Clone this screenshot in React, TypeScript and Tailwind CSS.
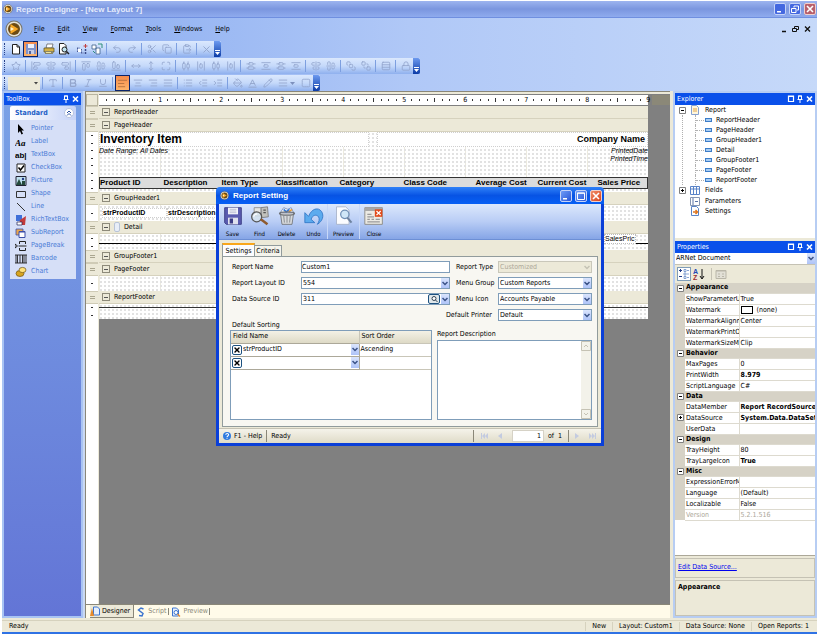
import type { ReactNode } from 'react';
import {
  AlignCenter,
  AlignCenterHorizontal,
  AlignCenterVertical,
  AlignEndHorizontal,
  AlignEndVertical,
  AlignHorizontalDistributeCenter,
  AlignHorizontalSpaceAround,
  AlignJustify,
  AlignLeft,
  AlignRight,
  AlignStartHorizontal,
  AlignStartVertical,
  AlignVerticalDistributeCenter,
  AlignVerticalSpaceAround,
  Baseline,
  Bold,
  BringToFront,
  ClipboardPaste,
  Copy,
  IndentDecrease,
  IndentIncrease,
  Italic,
  List,
  Lock,
  Maximize,
  MoveHorizontal,
  MoveVertical,
  PaintBucket,
  Pencil,
  Redo2,
  Rows3,
  Scissors,
  SendToBack,
  Square,
  Star,
  Type,
  Underline,
  Undo2,
  X,
  type LucideIcon,
} from 'lucide-react';
import clsx from 'clsx';

const menus = ['File', 'Edit', 'View', 'Format', 'Tools', 'Windows', 'Help'];

const layoutTools: [string, LucideIcon][][] = [
  [['Snap to grid', Star]],
  [['Align lefts', AlignStartVertical], ['Align centers', AlignCenterVertical], ['Align rights', AlignEndVertical]],
  [['Align tops', AlignStartHorizontal], ['Align middles', AlignCenterHorizontal], ['Align bottoms', AlignEndHorizontal]],
  [['Same width', MoveHorizontal], ['Same height', MoveVertical], ['Same size', Maximize]],
  [
    ['Equal horizontal spacing', AlignHorizontalDistributeCenter],
    ['Increase horizontal spacing', AlignHorizontalSpaceAround],
    ['Decrease horizontal spacing', AlignHorizontalDistributeCenter],
    ['Remove horizontal spacing', AlignHorizontalSpaceAround],
  ],
  [
    ['Equal vertical spacing', AlignVerticalDistributeCenter],
    ['Increase vertical spacing', AlignVerticalSpaceAround],
    ['Decrease vertical spacing', AlignVerticalDistributeCenter],
    ['Remove vertical spacing', AlignVerticalSpaceAround],
  ],
  [['Center horizontally', AlignCenterVertical], ['Center vertically', AlignCenterHorizontal]],
  [['Bring to front', BringToFront], ['Send to back', SendToBack]],
  [['Reorder groups', Rows3]],
  [['Lock controls', Lock]],
];

const columns = [
  'Product ID',
  'Description',
  'Item Type',
  'Classification',
  'Category',
  'Class Code',
  'Average Cost',
  'Current Cost',
  'Sales Price',
];

const propertyGroups: { name: string; rows: { name: string; value: string; bold?: boolean; plus?: boolean; muted?: boolean; swatch?: boolean }[] }[] = [
  {
    name: 'Appearance',
    rows: [
      { name: 'ShowParameterUI', value: 'True' },
      { name: 'Watermark', value: '(none)', swatch: true },
      { name: 'WatermarkAlignment', value: 'Center' },
      { name: 'WatermarkPrintOnPages', value: '' },
      { name: 'WatermarkSizeMode', value: 'Clip' },
    ],
  },
  {
    name: 'Behavior',
    rows: [
      { name: 'MaxPages', value: '0' },
      { name: 'PrintWidth', value: '8.979', bold: true },
      { name: 'ScriptLanguage', value: 'C#' },
    ],
  },
  {
    name: 'Data',
    rows: [
      { name: 'DataMember', value: 'Report RecordSource', bold: true },
      { name: 'DataSource', value: 'System.Data.DataSet', bold: true, plus: true },
      { name: 'UserData', value: '' },
    ],
  },
  {
    name: 'Design',
    rows: [
      { name: 'TrayHeight', value: '80' },
      { name: 'TrayLargeIcon', value: 'True', bold: true },
    ],
  },
  {
    name: 'Misc',
    rows: [
      { name: 'ExpressionErrorMessage', value: '' },
      { name: 'Language', value: '(Default)' },
      { name: 'Localizable', value: 'False' },
      { name: 'Version', value: '5.2.1.516', muted: true },
    ],
  },
];

function AppLogo({ className }: { className: string }) {
  return (
    <svg viewBox="0 0 18 18" className={className} aria-hidden="true">
      <circle cx="9" cy="9" r="8.5" fill="#77756c" />
      <circle cx="9" cy="9" r="7.5" fill="#e4e1d7" />
      <circle cx="9" cy="9" r="6" fill="#6b4a14" />
      <path d="M5.500 4v10L13.500 9z" fill="#f7a928" />
      <path d="M5.500 7v4L9 9z" fill="#fff3cf" />
    </svg>
  );
}

function ToolButton({ label, active, disabled, children }: { label: string; active?: boolean; disabled?: boolean; children: ReactNode }) {
  return (
    <button
      type="button"
      title={label}
      aria-label={label}
      disabled={disabled}
      className={clsx(
        'flex h-4 w-[15px] shrink-0 items-center justify-center',
        active && 'border border-[#0a246a] bg-gradient-to-b from-[#f58b4c] to-[#fdb46b]',
        disabled && 'text-[#93a5cc]'
      )}
    >
      {children}
    </button>
  );
}

function Sep({ blank }: { blank?: boolean }) {
  return (
    <span className={clsx('flex shrink-0 justify-center', blank ? 'w-[3px]' : 'w-[5px]')}>
      {!blank && <span className="h-3 w-px bg-[#7d9fe0]" />}
    </span>
  );
}

function Toolbar({ label, children }: { label: string; children: ReactNode }) {
  return (
    <div
      role="toolbar"
      aria-label={label}
      className="mt-px flex h-4 w-fit items-center bg-gradient-to-b from-[#dbe8fd] via-[#c5d9fa] to-[#8fb0ee]"
    >
      <span className="ml-0.5 mr-[3px] h-3 border-l border-dotted border-[#27418a]" />
      {children}
      <button type="button" aria-label="Toolbar options" className="flex h-4 w-[7px] items-end justify-center rounded-r-[2px] bg-gradient-to-b from-[#6d9af0] to-[#0b3ba6] pb-0.5">
        <svg viewBox="0 0 5 5" className="size-[5px]">
          <path d="M0 0h5v1H0zM0 2h5L2.500 5z" fill="#fff" />
        </svg>
      </button>
    </div>
  );
}

const standardIcons = {
  page: (
    <svg viewBox="0 0 12 12" className="size-3">
      <path d="M2.500 1.500h4.500l2.500 2.500v7h-7z" fill="#fff" stroke="#222" />
      <path d="M7 1.500v2.500h2.500" fill="none" stroke="#222" />
    </svg>
  ),
  save: (
    <svg viewBox="0 0 12 12" className="size-3">
      <path d="M1 1h10v10H1z" fill="#7f93cb" />
      <path d="M3 1h6v4H3z" fill="#eef1fa" />
      <path d="M3 7h6v4H3z" fill="#c6cde6" />
      <path d="M4 8h2v3H4z" fill="#51629c" />
    </svg>
  ),
  print: (
    <svg viewBox="0 0 12 12" className="size-3">
      <path d="M3 5l1-4h6L9 5z" fill="#fff" stroke="#555" strokeWidth=".7" />
      <path d="M1 5h10v4H1z" fill="#d5b248" stroke="#554a1c" strokeWidth=".7" />
      <path d="M2 8h8v3H2z" fill="#8b8665" />
      <path d="M3 9h5v1H3z" fill="#efe29c" />
    </svg>
  ),
  preview: (
    <svg viewBox="0 0 12 12" className="size-3">
      <path d="M1.500.5h4.500l2 2v8.500h-6.500z" fill="#fff" stroke="#222" />
      <circle cx="6.500" cy="6.500" r="2.500" fill="#bfe4f2" stroke="#222" />
      <path d="M8.500 8.500L11 11" stroke="#222" strokeWidth="1.500" />
    </svg>
  ),
  fields: (
    <svg viewBox="0 0 12 12" className="size-3">
      <path d="M1.500 5v4M1 5h3M5.500 6v4M5 10h3" stroke="#4a5a96" strokeDasharray="1.500 1" />
      <path d="M2 6h3v3H2z" fill="#fff" />
      <path d="M9.500 1v4M7.500 3h4" stroke="#c04040" />
      <path d="M9.500 6v5" stroke="#3a4a86" strokeWidth="1.500" strokeDasharray="2 1" />
    </svg>
  ),
  script: (
    <svg viewBox="0 0 12 12" className="size-3">
      <path d="M1 2h4v4H1zM5 5h4v6H5z" fill="#fff" stroke="#3c5f8c" strokeWidth=".8" />
      <path d="M7 1h4v4M2 8l2 2" fill="none" stroke="#2f8f7b" />
    </svg>
  ),
};

function Toolbars() {
  return (
    <div>
      <Toolbar label="Standard">
        <ToolButton label="New">{standardIcons.page}</ToolButton>
        <ToolButton label="Save" active>{standardIcons.save}</ToolButton>
        <Sep blank />
        <ToolButton label="Print">{standardIcons.print}</ToolButton>
        <ToolButton label="Preview">{standardIcons.preview}</ToolButton>
        <Sep blank />
        <ToolButton label="Fields">{standardIcons.fields}</ToolButton>
        <ToolButton label="Script">{standardIcons.script}</ToolButton>
        <Sep />
        <ToolButton label="Undo" disabled><Undo2 size={10} /></ToolButton>
        <ToolButton label="Redo" disabled><Redo2 size={10} /></ToolButton>
        <Sep />
        <ToolButton label="Cut" disabled><Scissors size={10} /></ToolButton>
        <ToolButton label="Copy" disabled><Copy size={10} /></ToolButton>
        <Sep />
        <ToolButton label="Paste" disabled><ClipboardPaste size={10} /></ToolButton>
        <Sep />
        <ToolButton label="Delete" disabled><X size={11} /></ToolButton>
      </Toolbar>
      <Toolbar label="Layout">
        {layoutTools.map((group, i) => (
          <div key={i} className="flex items-center">
            {i > 0 && <Sep />}
            {group.map(([label, Icon]) => (
              <ToolButton key={label} label={label} disabled>
                <Icon size={10} />
              </ToolButton>
            ))}
          </div>
        ))}
      </Toolbar>
      <Toolbar label="Formatting">
        <Combo label="Font size" options={['']} className="h-[13px] w-8 bg-[#ece9d8]" plain />
        <Sep />
        <ToolButton label="Font" disabled><Type size={10} /></ToolButton>
        <Sep />
        <ToolButton label="Bold" disabled><Bold size={10} strokeWidth={3} /></ToolButton>
        <ToolButton label="Italic" disabled><Italic size={10} /></ToolButton>
        <ToolButton label="Underline" disabled><Underline size={10} /></ToolButton>
        <Sep />
        <ToolButton label="Align left" active><AlignLeft size={11} className="text-[#b5713f]" /></ToolButton>
        <ToolButton label="Center" disabled><AlignCenter size={10} /></ToolButton>
        <ToolButton label="Align right" disabled><AlignRight size={10} /></ToolButton>
        <ToolButton label="Justify" disabled><AlignJustify size={10} /></ToolButton>
        <Sep />
        <ToolButton label="Bullets" disabled><List size={10} /></ToolButton>
        <ToolButton label="Outdent" disabled><IndentDecrease size={10} /></ToolButton>
        <ToolButton label="Indent" disabled><IndentIncrease size={10} /></ToolButton>
        <Sep />
        <ToolButton label="Fill color" disabled><PaintBucket size={10} /></ToolButton>
        <ToolButton label="Text color" disabled><Baseline size={11} /></ToolButton>
        <ToolButton label="Line color" disabled><Pencil size={10} /></ToolButton>
        <ToolButton label="Line style" disabled><AlignJustify size={10} /></ToolButton>
        <svg viewBox="0 0 5 5" className="size-[5px]"><path d="M0 1h5L2.500 4z" fill="#7d90bd" /></svg>
        <Sep blank />
        <ToolButton label="Border" disabled><Square size={10} strokeDasharray="3 2" /></ToolButton>
      </Toolbar>
    </div>
  );
}

function Combo({
  label,
  id,
  options,
  className,
  disabled,
  plain,
}: {
  label?: string;
  id?: string;
  options: string[];
  className?: string;
  disabled?: boolean;
  plain?: boolean;
}) {
  return (
    <span className={clsx('flex min-w-0 items-stretch', className)}>
      <select
        id={id}
        aria-label={label}
        disabled={disabled}
        className={clsx('min-w-0 flex-1 appearance-none truncate bg-transparent pl-px leading-none outline-none', disabled && 'text-[#aca899]')}
      >
        {options.map((option) => (
          <option key={option}>{option}</option>
        ))}
      </select>
      <span
        className={clsx(
          'pointer-events-none flex w-2 shrink-0 items-center justify-center',
          !plain && !disabled && 'bg-gradient-to-b from-[#dbe5fd] to-[#aec3f8] text-[#3b5387]',
          disabled && 'text-[#c5c2b4]'
        )}
      >
        <svg viewBox="0 0 6 5" className="h-[5px] w-1.5">
          {plain ? <path d="M1 1h4L3 3.500z" fill="#444" /> : <path d="M.5 1L3 3.500 5.500 1" fill="none" stroke="currentColor" strokeWidth="1.500" />}
        </svg>
      </span>
    </span>
  );
}

function PanelHeader({ title, maximize }: { title: string; maximize?: boolean }) {
  return (
    <header className="flex h-3 shrink-0 items-center bg-[#0a50ea] pl-0.5 pr-0.5 text-white">
      <h2 className="flex-1">{title}</h2>
      <svg viewBox="0 0 26 8" className="h-2 w-[26px]" fill="none" stroke="#fff">
        {maximize && <path d="M1.500 1v5.500h5V1zM1 1.500h6" strokeWidth="1.200" />}
        <path d="M11.500 1v3.500h3V1zM11 1h4M10.500 4.500h5M13 4.500V8" strokeWidth="1" />
        <path d="M20 1.500l5 5M25 1.500l-5 5" strokeWidth="1.600" />
      </svg>
    </header>
  );
}

const toolboxItems: [string, ReactNode][] = [
  ['Pointer', <path key="p" d="M3 1v9l2-2 1.500 3.500 1.500-.7L6.500 7.500H9z" fill="#000" />],
  ['Label', <text key="l" x="0" y="9.500" fontSize="9" fontWeight="700" fontStyle="italic" fontFamily="Liberation Serif, serif">Aa</text>],
  ['TextBox', <text key="t" x="0" y="9" fontSize="8" fontWeight="700" fontFamily="Liberation Sans, sans-serif">ab|</text>],
  [
    'CheckBox',
    <g key="c">
      <path d="M2 2h8v8H2z" fill="#fff" stroke="#222" />
      <path d="M3.500 5.500l2 2.500L9 3.500" fill="none" stroke="#000" strokeWidth="1.500" />
    </g>,
  ],
  [
    'Picture',
    <g key="pic">
      <path d="M1 1.500h10v9H1z" fill="#bfe0f0" stroke="#223" />
      <path d="M1 10l3-6 3 6zM7 6h3v4H7z" fill="#244a3c" />
      <circle cx="8" cy="4" r="1.200" fill="#223a8a" />
    </g>,
  ],
  ['Shape', <path key="s" d="M1.500 3.500h9v6h-9z" fill="none" stroke="#333" />],
  ['Line', <path key="li" d="M2 2l8 8" stroke="#333" />],
  [
    'RichTextBox',
    <g key="r">
      <path d="M1 1h6v6H1z" fill="#3f6fd8" />
      <path d="M5 6l6-4-1 9H4z" fill="#c33b3b" />
      <path d="M2 8h5v3H2z" fill="#fff" stroke="#225" strokeWidth=".7" />
    </g>,
  ],
  [
    'SubReport',
    <g key="sr">
      <path d="M1 2h7v6H1z" fill="#e9a64d" stroke="#3c4fa8" strokeWidth=".8" />
      <path d="M4 4.500h6v6H4z" fill="#fff" stroke="#3c4fa8" />
      <path d="M4 5h6" stroke="#3c4fa8" />
    </g>,
  ],
  ['PageBreak', <path key="pb" d="M4.500 4V1.500h6V4M4.500 8v2.500h6V8M3.500 6h8M0 4l2.500 2L0 8z" fill="none" stroke="#222" />],
  ['Barcode', <path key="b" d="M1 2v8M2.500 2v8M5 2v8M7.500 2v8M9 2v8M11 2v8M0 2h12M0 10h12" stroke="#222" strokeWidth=".9" />],
  [
    'Chart',
    <g key="ch">
      <ellipse cx="5" cy="7.500" rx="4" ry="3" fill="#d8a520" stroke="#6f520c" strokeWidth=".7" />
      <ellipse cx="7.500" cy="4" rx="3.500" ry="2.600" fill="#ffe27a" stroke="#6f520c" strokeWidth=".7" />
    </g>,
  ],
];

function Toolbox() {
  return (
    <aside className="flex w-[81px] shrink-0 flex-col border-2 border-[#a9c4f3]">
      <PanelHeader title="ToolBox" />
      <div className="flex-1 bg-gradient-to-b from-[#7aa1e6] to-[#6375d6] pl-1.5 pr-[5px] pt-px">
        <section className="overflow-hidden rounded-t-[2px]">
          <h3 className="flex h-[14px] items-center justify-between bg-gradient-to-r from-white to-[#c6d3f7] pl-[5px] pr-0.5 font-bold text-[#215dc6]">
            Standard
            <button type="button" aria-label="Collapse" className="size-2.5 rounded-full border border-[#b8c4e0] bg-white">
              <svg viewBox="0 0 8 8" className="size-2">
                <path d="M2 4l2-2 2 2M2 6.500l2-2 2 2" fill="none" stroke="#2a4fa0" />
              </svg>
            </button>
          </h3>
          <ul className="bg-[#d6dff7] pb-px pt-0.5">
            {toolboxItems.map(([name, icon]) => (
              <li key={name}>
                <button type="button" className="flex h-[13px] w-full items-center gap-1 pl-[5px] text-[#4a7bd6]">
                  <svg viewBox="0 0 12 12" className="size-3 shrink-0">{icon}</svg>
                  <span>{name}</span>
                </button>
              </li>
            ))}
          </ul>
        </section>
      </div>
    </aside>
  );
}

function Ruler() {
  return (
    <div className="flex h-3 items-center">
      <span className="mr-px h-3 w-3 border border-[#b9b59f] bg-[#ece9d8]" />
      <div className="flex h-2.5 w-[549px] items-center bg-white pl-1">
        {[1, 2, 3, 4, 5, 6, 7, 8, 9].map((inch) => (
          <div key={inch} className="grid w-[61px] shrink-0 grid-cols-8 place-items-center">
            {[1, 2, 3].map((n) => <span key={n} className="h-0.5 w-px bg-[#333]" />)}
            <span className="h-1 w-px bg-[#333]" />
            {[5, 6, 7].map((n) => <span key={n} className="h-0.5 w-px bg-[#333]" />)}
            <span className="text-center leading-none">{inch}</span>
          </div>
        ))}
      </div>
      <div className="ml-1 h-2.5 flex-1 bg-[#8b8878]" />
    </div>
  );
}

function Band({ name, detail }: { name: string; detail?: boolean }) {
  return (
    <div className="flex h-[13px]">
      <span className="mr-px flex w-3 items-center justify-center border-y border-[#cfcbb6] bg-[#ece9d8]">
        <span className="h-[3px] w-[5px] border-y border-[#aaa690]" />
      </span>
      <div className="flex w-[549px] items-center gap-1 border-b border-[#d6d2be] bg-[#ece9d8] pl-[3px]">
        <button type="button" aria-label={`Collapse ${name}`} className="flex size-2 items-center justify-center border border-[#8d8a7a]">
          <span className="h-px w-1 bg-[#555]" />
        </button>
        {detail && <span className="h-2.5 w-1.5 rounded-[2px] border border-[#b8c4d8] bg-[#e8eef8]" />}
        <span>{name}</span>
      </div>
    </div>
  );
}

function BandBody({ ticks, children, className }: { ticks: number; children?: ReactNode; className: string }) {
  return (
    <div className={clsx('flex', className)}>
      <div className="mr-px flex w-3 shrink-0 flex-col items-center justify-around bg-white">
        {Array.from({ length: ticks }, (_, i) => <span key={i} className="h-px w-0.5 bg-[#333]" />)}
      </div>
      <div className="w-[549px] bg-white bg-[radial-gradient(#e2e2e2_1px,transparent_1px),linear-gradient(90deg,#eceadf_1px,transparent_1px)] bg-[size:4px_4px,61px_100%]">
        {children}
      </div>
    </div>
  );
}

function Designer() {
  return (
    <main className="flex min-w-0 flex-1 flex-col border-l border-t border-[#8a8778] bg-[#ece9d8] pt-0.5">
      <div className="flex flex-1 flex-col bg-[linear-gradient(90deg,#fff_12px,#ece9d8_12px,#ece9d8_13px,#808080_13px)]">
        <Ruler />
        <Band name="ReportHeader" />
        <Band name="PageHeader" />
        <BandBody ticks={8} className="h-[60px] font-['Liberation_Sans',Arial,sans-serif]">
          <div className="flex h-full flex-col">
            <div className="flex h-[15px] gap-2">
              <h1 className="flex-1 border border-dotted border-[#cfcfcf] bg-white text-[12px] font-bold leading-[13px]">Inventory Item</h1>
              <p className="flex-1 border border-dotted border-[#cfcfcf] bg-white pr-0.5 text-right text-[9px] font-bold leading-3">Company Name</p>
            </div>
            <div className="flex justify-between italic leading-2">
              <p>Date Range: All Dates</p>
              <p className="text-right">PrintedDate<br />PrintedTime</p>
            </div>
            <table className="mt-auto w-full table-fixed border border-[#333] bg-[#dcdcdc] text-left text-[8px] leading-2.5">
              <colgroup>
                <col className="w-16" />
                <col className="w-[58px]" />
                <col className="w-[54px]" />
                <col className="w-16" />
                <col className="w-16" />
                <col className="w-[72px]" />
                <col className="w-[62px]" />
                <col className="w-[60px]" />
                <col />
              </colgroup>
              <thead>
                <tr>
                  {columns.map((column) => <th key={column} className="whitespace-nowrap">{column}</th>)}
                </tr>
              </thead>
            </table>
            <div className="h-[3px] shrink-0" />
          </div>
        </BandBody>
        <Band name="GroupHeader1" />
        <BandBody ticks={1} className="h-4">
          <div className="flex h-full items-center pl-[3px] font-['Liberation_Sans',Arial,sans-serif] font-bold">
            <span className="w-[65px] border border-dotted border-[#cfcfcf] bg-white leading-2">strProductID</span>
            <span className="w-16 border border-dotted border-[#cfcfcf] bg-white leading-2">strDescription</span>
          </div>
        </BandBody>
        <Band name="Detail" detail />
        <BandBody ticks={2} className="h-4">
          <div className="flex h-2.5 items-center justify-end border-b border-black pr-3 font-['Liberation_Sans',Arial,sans-serif]">
            <span className="w-8 border border-dotted border-[#bbb] bg-white leading-2">SalesPric</span>
          </div>
        </BandBody>
        <Band name="GroupFooter1" />
        <Band name="PageFooter" />
        <BandBody ticks={1} className="h-[15px]" />
        <Band name="ReportFooter" />
        <BandBody ticks={2} className="h-[15px]">
          <div className="h-1 border-b border-[#333]" />
        </BandBody>
      </div>
      <nav className="flex h-[14px] items-stretch border-t border-[#8a8778] bg-[#fffbe9] text-[#8a8778]">
        <button type="button" className="ml-1 flex items-center gap-0.5 border-b border-r border-[#8a8778] bg-[#ece9d8] pr-[3px] text-black">
          <svg viewBox="0 0 10 10" className="size-2.5">
            <path d="M3.500 1h4l2 2v6h-6z" fill="#e5effd" stroke="#3c74cf" />
            <path d="M0 10L2 2l2 8z" fill="#e88a2a" />
          </svg>
          Designer
        </button>
        <button type="button" className="flex items-center gap-0.5 pl-0.5">
          <svg viewBox="0 0 10 10" className="size-2.5">
            <path d="M7.500 2L5 1 2.500 3 7 6.500 6 9 3 8.500" fill="none" stroke="#3c74cf" strokeWidth="1.500" />
          </svg>
          Script
        </button>
        <span className="my-[3px] ml-0.5 w-px bg-[#8a8778]" />
        <button type="button" className="flex items-center gap-0.5 pl-0.5">
          <svg viewBox="0 0 10 10" className="size-2.5">
            <path d="M1.500 1h4l2 2v6h-6z" fill="#e5effd" stroke="#3c74cf" />
            <circle cx="5" cy="5.500" r="2" fill="#fff" stroke="#3c74cf" />
            <path d="M6.500 7L9 9.500" stroke="#e88a2a" strokeWidth="1.300" />
          </svg>
          Preview
        </button>
        <span className="my-[3px] ml-px w-px bg-[#8a8778]" />
      </nav>
    </main>
  );
}

const sections = ['ReportHeader', 'PageHeader', 'GroupHeader1', 'Detail', 'GroupFooter1', 'PageFooter', 'ReportFooter'];

function TreeBox({ plus }: { plus?: boolean }) {
  return (
    <svg viewBox="0 0 7 7" className="size-[7px] shrink-0">
      <path d="M.5.5h6v6h-6z" fill="#fff" stroke="#808080" />
      <path d={plus ? 'M2 3.500h3M3.500 2v3' : 'M2 3.500h3'} stroke="#000" />
    </svg>
  );
}

function Explorer() {
  return (
    <section className="flex h-[145px] flex-col">
      <PanelHeader title="Explorer" maximize />
      <ul className="flex-1 bg-white pl-1">
        <li>
          <div className="flex h-2.5 items-center">
            <TreeBox />
            <svg viewBox="0 0 10 10" className="ml-1 mr-[5px] size-2.5">
              <path d="M1.500.5h5l2 2v7h-7z" fill="#fff6dc" stroke="#86a0d0" />
              <path d="M3 4h4M3 6h4" stroke="#e0a44a" />
            </svg>
            Report
          </div>
          <ul className="ml-[3px] border-l border-dotted border-[#b0b0b0] pl-3">
            {sections.map((section) => (
              <li key={section} className="flex h-2.5 items-center border-l border-dotted border-[#b0b0b0]">
                <span className="w-2 border-t border-dotted border-[#b0b0b0]" />
                <span className="ml-px mr-1 h-1 w-[7px] border border-[#3c7cc8] bg-[#a8cdf2]" />
                {section}
              </li>
            ))}
          </ul>
        </li>
        <li className="flex h-[11px] items-center">
          <TreeBox plus />
          <svg viewBox="0 0 10 9" className="ml-1 mr-[5px] h-[9px] w-2.5">
            <path d="M.5.5h9v8h-9z" fill="#fff" stroke="#5a84c8" />
            <path d="M3.500 1v7M6.500 1v7M1 3h8" stroke="#5a84c8" />
          </svg>
          Fields
        </li>
        <li className="flex h-2.5 items-center pl-[7px]">
          <svg viewBox="0 0 10 9" className="ml-1 mr-[5px] h-[9px] w-2.5">
            <path d="M.5.5h9v8h-9z" fill="#fff" stroke="#8696b4" />
            <path d="M3 1v7M5 4.500h3" stroke="#5a74a8" />
          </svg>
          Parameters
        </li>
        <li className="flex h-2.5 items-center pl-[7px]">
          <svg viewBox="0 0 10 10" className="ml-1 mr-[5px] size-2.5">
            <path d="M1.500.5h5l2 2v7h-7z" fill="#fff" stroke="#5a84c8" />
            <path d="M3 6h4M5.500 4l2 2-2 2" fill="none" stroke="#e0761e" strokeWidth="1.500" />
          </svg>
          Settings
        </li>
      </ul>
    </section>
  );
}

function Properties() {
  return (
    <section className="mt-[3px] flex flex-1 flex-col">
      <PanelHeader title="Properties" maximize />
      <Combo label="Object" options={['ARNet Document']} className="h-3 border-b border-[#c5c2b4] bg-white" />
      <div role="toolbar" aria-label="Property view" className="flex h-[18px] items-center gap-0.5 pl-0.5">
        <button type="button" aria-label="Categorized" className="flex h-[14px] w-3.5 items-center justify-center border border-[#7f9db9] bg-white">
          <svg viewBox="0 0 12 12" className="size-3">
            <path d="M1 2.500h3M2.500 1v3M1 8.500h3" stroke="#223c88" />
            <path d="M6 1.500h2v2H6zM6 5h2v2H6zM6 8.500h2v2H6zM9 2.500h2M9 6h2M9 9.500h2" fill="none" stroke="#6c8fc8" strokeWidth=".8" />
          </svg>
        </button>
        <button type="button" aria-label="Alphabetical" className="flex h-[14px] w-3 items-center justify-center">
          <svg viewBox="0 0 12 12" className="size-3">
            <text x="0" y="6" fontSize="7" fontWeight="700" fill="#2347b5" fontFamily="Liberation Sans, sans-serif">A</text>
            <text x="0" y="12" fontSize="7" fontWeight="700" fill="#a02f2f" fontFamily="Liberation Sans, sans-serif">Z</text>
            <path d="M9 1v9M7 8l2 3 2-3" fill="none" stroke="#111" />
          </svg>
        </button>
        <span className="ml-1 h-3 w-px bg-[#c5c2b4]" />
        <button type="button" disabled aria-label="Property pages" className="flex h-[14px] w-3.5 items-center justify-center">
          <svg viewBox="0 0 12 12" className="size-3">
            <path d="M1 2.500h10v8H1z" fill="#e2e0d6" stroke="#b9b6a8" />
            <path d="M1 3h10M3 6h2M7 6h2M3 8.500h2M7 8.500h2" stroke="#b9b6a8" />
          </svg>
        </button>
      </div>
      <div className="flex-1 overflow-hidden border-b border-[#aca899] bg-white">
        <table className="w-full table-fixed border-collapse">
          <colgroup>
            <col className="w-[10px]" />
            <col className="w-[54px]" />
            <col />
          </colgroup>
          {propertyGroups.map((group) => (
            <tbody key={group.name}>
              <tr className="h-[10px] bg-[#d6d2c6]">
                <td className="p-0 align-middle"><span className="flex justify-center"><TreeBox /></span></td>
                <th colSpan={2} className="p-0 pl-px text-left font-bold">{group.name}</th>
              </tr>
              {group.rows.map((row) => (
                <tr key={row.name} className={clsx('h-[11px] leading-[10px]', row.muted && 'text-[#aca899]')}>
                  <td className="bg-[#d6d2c6] p-0">{row.plus && <span className="flex justify-center"><TreeBox plus /></span>}</td>
                  <td className="overflow-hidden whitespace-nowrap border border-l-0 border-[#dddacf] p-0 pl-px">{row.name}</td>
                  <td className={clsx('overflow-hidden whitespace-nowrap border border-r-0 border-[#dddacf] p-0 pl-px', row.bold && 'font-bold')}>
                    {row.swatch ? (
                      <span className="flex items-center gap-1">
                        <span className="h-2 w-3 border border-black bg-white" />
                        {row.value}
                      </span>
                    ) : (
                      row.value
                    )}
                  </td>
                </tr>
              ))}
            </tbody>
          ))}
        </table>
      </div>
      <div className="mt-0.5 h-5 border border-[#c5c2b4] px-0.5 pt-1">
        <a href="#data-source" className="text-[#0000ee] underline">Edit Data Source...</a>
      </div>
      <div className="mt-0.5 h-9 border border-[#c5c2b4] px-0.5 pt-0.5 font-bold">Appearance</div>
    </section>
  );
}

const dialogTools: [string, ReactNode][] = [
  [
    'Save',
    <g key="s">
      <path d="M2 2h20v20H4l-2-2z" fill="#5a5bb0" stroke="#33347c" />
      <path d="M6 2h12v8H6z" fill="#f3f4fa" />
      <path d="M8 4h8M8 6h8M8 8h8" stroke="#b6b9cf" />
      <path d="M6 14h12v8H6z" fill="#dfe1ee" />
      <path d="M8 15h4v6H8z" fill="#3b3c84" />
    </g>,
  ],
  [
    'Find',
    <g key="f">
      <path d="M13 2l8-1 1 12-8 1z" fill="#c2c2bd" stroke="#777" />
      <path d="M16 5h3M16 8h3" stroke="#555" strokeWidth="1.500" />
      <path d="M5 2h8v10H5z" fill="#e6e6e2" stroke="#888" />
      <circle cx="8" cy="13" r="6" fill="#d6e4ee" fillOpacity=".85" stroke="#555" strokeWidth="1.500" />
      <path d="M13 16l8 6" stroke="#8e5a2e" strokeWidth="3" />
      <path d="M4.500 13c0-2 2-3.500 4-3.500" fill="none" stroke="#fff" strokeWidth="1.500" />
    </g>,
  ],
  [
    'Delete',
    <g key="d">
      <path d="M4 8h16l-2 14H6z" fill="#d8dadc" stroke="#6d7074" />
      <path d="M8 12l1 8M12 12v8M16 12l-1 8" stroke="#9a9ea3" strokeWidth="1.500" />
      <path d="M4 8l4-6 5 2 4-2 3 6z" fill="#fff" stroke="#7a8db5" />
      <path d="M8 4l3 3 4-3" stroke="#3579d8" strokeWidth="2" fill="none" />
      <path d="M14 7l4-3" stroke="#e79b32" strokeWidth="2" />
      <ellipse cx="12" cy="9" rx="9" ry="2" fill="none" stroke="#6d7074" strokeWidth="1.500" />
    </g>,
  ],
  [
    'Undo',
    <path key="u" d="M1 8v12h12l-4.500-4C10 11 15 9.500 17.500 13c1.500 3 .5 6-1.500 9 6-3.500 8.500-10 5-15.500C17 1 9 3 5.500 12.500z" fill="#5cabee" stroke="#2f74c4" />,
  ],
  [
    'Preview',
    <g key="p">
      <path d="M3 1h11l4 4v17H3z" fill="#fbfcff" stroke="#a6b1c7" />
      <circle cx="13" cy="10" r="5" fill="#cfe6f7" stroke="#6f8fb5" strokeWidth="1.500" />
      <path d="M16 14l5 6" stroke="#6e83a0" strokeWidth="2.500" />
    </g>,
  ],
  [
    'Close',
    <g key="c">
      <path d="M1 2h21v20H1z" fill="#eceae4" stroke="#84817a" />
      <path d="M1 2h21v4H1z" fill="#a8a8a8" />
      <path d="M4 10h5M4 13h8M4 16h3M9 16h3M14 16h5M4 19h15" stroke="#999" strokeWidth="1.500" />
      <path d="M13 4h9v9h-9z" fill="#e24a1a" />
      <path d="M15 6l5 5M20 6l-5 5" stroke="#fff" strokeWidth="1.500" />
    </g>,
  ],
];

const boxed = 'border border-[#7f9db9] bg-white';

function SortRow({ field, order }: { field: string; order: string }) {
  return (
    <tr className="h-[13px]">
      <td className="border border-l-0 border-[#aca899] p-0">
        <div className="flex items-center">
          <button type="button" aria-label="Remove sort field" className="ml-px flex size-2.5 shrink-0 items-center justify-center rounded-[2px] border border-[#1c5180] bg-white">
            <X size={8} strokeWidth={4} />
          </button>
          <Combo label="Field name" options={[field]} className="h-[11px] flex-1" />
        </div>
      </td>
      <td className="border border-r-0 border-[#c9c6b8] p-0 pl-px">{order}</td>
    </tr>
  );
}

function ReportSetting() {
  return (
    <div
      role="dialog"
      aria-label="Report Setting"
      className="absolute left-[214px] top-[186px] flex w-[388px] flex-col rounded-t-md border-x-[3px] border-b-[3px] border-[#0a3fd8] bg-[#ece9d8]"
    >
      <header className="-mx-[3px] flex h-[17px] items-center gap-1 rounded-t bg-gradient-to-b from-[#2f80f8] via-[#0753e4] to-[#0660f5] pl-1 pr-0.5 text-white">
        <AppLogo className="size-[9px]" />
        <h2 className="flex-1 font-['Liberation_Sans',Arial,sans-serif] text-[8px] font-bold">Report Setting</h2>
        <WindowButtons />
      </header>
      <div role="toolbar" aria-label="Report" className="flex h-9 items-stretch border-b border-[#6d8fd5] bg-gradient-to-b from-[#dce8fc] via-[#b9cdf5] to-[#86a5e6]">
        {dialogTools.map(([name, icon]) => (
          <button
            key={name}
            type="button"
            className={clsx(
              'flex flex-col items-center justify-end gap-[3px]',
              name === 'Preview' ? 'w-[33px] border-x border-[#c8d8f8]' : name === 'Close' ? 'w-7' : 'w-[27px]'
            )}
          >
            <svg viewBox="0 0 24 24" className="size-5">{icon}</svg>
            <span className="pb-px text-[6px] leading-[9px]">{name}</span>
          </button>
        ))}
      </div>
      <div className="px-[3px] pb-px pt-[3px]">
        <div role="tablist" className="flex items-end">
          <button type="button" role="tab" aria-selected="true" className="h-[13px] w-[33px] border-x border-t-2 border-x-[#919b9c] border-t-[#f9a61a] bg-[#fcfcfe] leading-2">Settings</button>
          <button type="button" role="tab" aria-selected="false" className="h-[11px] w-[27px] border border-b-0 border-l-0 border-[#919b9c] bg-[#f5f4ec]">Criteria</button>
        </div>
        <div className="border border-[#919b9c] bg-[#f8f7f2] px-[5px] pb-1.5 pt-1 pl-[7px]">
          <div className="flex gap-1.5">
            <div className="flex flex-1 flex-col gap-1">
              <div className="flex h-3 items-center">
                <label htmlFor="name" className="w-[71px] pl-0.5">Report Name</label>
                <input id="name" defaultValue="Custom1" className={clsx(boxed, 'h-3 min-w-0 flex-1')} />
              </div>
              <div className="flex h-3 items-center">
                <label htmlFor="layout" className="w-[71px] pl-0.5">Report Layout ID</label>
                <Combo id="layout" options={['554']} className={clsx(boxed, 'h-3 flex-1')} />
              </div>
              <div className="flex h-3 items-center">
                <label htmlFor="source" className="w-[71px] pl-0.5">Data Source ID</label>
                <div className={clsx(boxed, 'flex h-3 flex-1')}>
                  <input id="source" defaultValue="311" className="min-w-0 flex-1 pl-px" />
                  <button type="button" aria-label="Find data source" className="flex w-3 items-center justify-center rounded-[2px] border border-[#1c5180] bg-[#dfe6ea]">
                    <svg viewBox="0 0 8 8" className="size-2" fill="none" stroke="#345">
                      <circle cx="4" cy="3.500" r="2" fill="#fff" />
                      <path d="M5.500 5l2 2" />
                    </svg>
                  </button>
                  <button type="button" aria-label="Show data sources" className="ml-px flex w-2 items-center justify-center bg-gradient-to-b from-[#dbe5fd] to-[#aec3f8]">
                    <svg viewBox="0 0 6 5" className="h-[5px] w-1.5">
                      <path d="M.5 1L3 3.500 5.500 1" fill="none" stroke="#3b5387" strokeWidth="1.500" />
                    </svg>
                  </button>
                </div>
              </div>
            </div>
            <div className="flex w-[136px] flex-col gap-1">
              <div className="flex h-3 items-center">
                <label htmlFor="type" className="w-[42px]">Report Type</label>
                <Combo id="type" disabled options={['Customized']} className="h-3 flex-1 border border-[#c9c7ba] bg-[#ece9d8]" />
              </div>
              <div className="flex h-3 items-center">
                <label htmlFor="group" className="w-[42px]">Menu Group</label>
                <Combo id="group" options={['Custom Reports']} className={clsx(boxed, 'h-3 flex-1')} />
              </div>
              <div className="flex h-3 items-center">
                <label htmlFor="icon" className="w-[42px]">Menu Icon</label>
                <Combo id="icon" options={['Accounts Payable']} className={clsx(boxed, 'h-3 flex-1')} />
              </div>
              <div className="-ml-2.5 flex h-3 items-center">
                <label htmlFor="printer" className="w-[52px] whitespace-nowrap">Default Printer</label>
                <Combo id="printer" options={['Default']} className={clsx(boxed, 'h-3 flex-1')} />
              </div>
            </div>
          </div>
          <div className="flex items-stretch gap-[5px]">
            <div className="w-[202px]">
              <h3 className="h-[9px] pl-0.5 leading-2">Default Sorting</h3>
              <div className={clsx(boxed, 'h-[90px]')}>
                <table className="w-full table-fixed border-collapse">
                  <thead>
                    <tr className="h-3 bg-gradient-to-b from-[#f3f1e6] to-[#dedac6] text-left">
                      <th className="w-[128px] border-r border-[#c9c6b8] p-0 pl-0.5 font-normal">Field Name</th>
                      <th className="p-0 pl-0.5 font-normal">Sort Order</th>
                    </tr>
                  </thead>
                  <tbody>
                    <SortRow field="strProductID" order="Ascending" />
                    <SortRow field="" order="" />
                  </tbody>
                </table>
              </div>
            </div>
            <div className="flex flex-1 flex-col justify-end">
              <label htmlFor="description" className="h-2.5">Report Description</label>
              <div className={clsx(boxed, 'flex h-20')}>
                <textarea id="description" className="min-w-0 flex-1 resize-none outline-none" />
                <div className="flex w-2.5 flex-col justify-between bg-[#f3f2ea] text-[#c5c2b4]">
                  <svg viewBox="0 0 10 10" className="size-2.5">
                    <path d="M.5.5h9v9h-9zM3 6l2-2 2 2" fill="none" stroke="currentColor" />
                  </svg>
                  <svg viewBox="0 0 10 10" className="size-2.5">
                    <path d="M.5.5h9v9h-9zM3 4l2 2 2-2" fill="none" stroke="currentColor" />
                  </svg>
                </div>
              </div>
            </div>
          </div>
        </div>
      </div>
      <footer className="flex h-[15px] items-center border-t border-[#c5c2b4] bg-gradient-to-b from-[#f5f3ea] to-[#dfdbc8] px-1">
        <svg viewBox="0 0 10 10" className="mr-[3px] size-2">
          <circle cx="5" cy="5" r="5" fill="#2f7be0" />
          <path d="M3.500 3.500c0-2 3.500-2 3.500 0C7 5 5 5 5 6.500M5 7.500v1" fill="none" stroke="#fff" strokeWidth="1.300" />
        </svg>
        <span>F1 - Help</span>
        <span className="mx-1 h-3 w-px bg-[#8a8778]" />
        <span className="flex-1">Ready</span>
        <span className="h-3 w-px bg-[#8a8778]" />
        <button type="button" disabled aria-label="First" className="ml-1.5">
          <svg viewBox="0 0 8 8" className="size-2" fill="#c3cbe0"><path d="M1 1h1v6H1zM5 1v6L2 4zM8 1v6L5 4z" /></svg>
        </button>
        <button type="button" disabled aria-label="Previous" className="mx-2">
          <svg viewBox="0 0 8 8" className="size-2" fill="#c3cbe0"><path d="M6 1v6L2 4z" /></svg>
        </button>
        <input aria-label="Page" defaultValue="1" className="h-3 w-8 border border-[#d6d2c6] bg-white pr-0.5 text-right" />
        <span className="ml-1">of&nbsp; 1</span>
        <span className="ml-1.5 h-3 w-px bg-[#8a8778]" />
        <button type="button" disabled aria-label="Next" className="ml-1">
          <svg viewBox="0 0 8 8" className="size-2" fill="#c3cbe0"><path d="M2 1v6l4-3z" /></svg>
        </button>
        <button type="button" disabled aria-label="Last" className="ml-2">
          <svg viewBox="0 0 8 8" className="size-2" fill="#c3cbe0"><path d="M6 1h1v6H6zM0 1v6l3-3zM3 1v6l3-3z" /></svg>
        </button>
      </footer>
    </div>
  );
}

function WindowButtons({ faded }: { faded?: boolean }) {
  const blue = faded ? 'bg-[#4468e0]' : 'bg-gradient-to-br from-[#6f9bf5] to-[#2a55d8]';
  return (
    <div className="flex gap-[3px]">
      <button type="button" aria-label="Minimize" className={clsx('size-3 rounded-[2px] border border-[#c5d3f8]', blue)}>
        <svg viewBox="0 0 10 10" className="size-2.5"><path d="M2 7h4v1.500H2z" fill="#fff" /></svg>
      </button>
      <button type="button" aria-label="Maximize" className={clsx('size-3 rounded-[2px] border border-[#c5d3f8]', blue)}>
        <svg viewBox="0 0 10 10" className="size-2.5" fill="none" stroke="#fff">
          {faded ? <path d="M4 3.500V2h4.500v4H7M1.500 4.500h4.500v4H1.500z" /> : <path d="M1.500 2v6.500h7V2zM1 2.200h8" />}
        </svg>
      </button>
      <button type="button" aria-label="Close" className={clsx('size-3 rounded-[2px] border border-[#f0d0cc]', faded ? 'bg-[#b8606c]' : 'bg-gradient-to-br from-[#f08a66] to-[#d8421a]')}>
        <svg viewBox="0 0 10 10" className="size-2.5"><path d="M2 2l6 6M8 2L2 8" stroke="#fff" strokeWidth="1.600" /></svg>
      </button>
    </div>
  );
}

export default function App() {
  return (
    <div className="flex min-h-screen flex-col bg-white pb-px pl-0.5 pr-[3px] pt-px font-['DejaVu_Sans_Condensed','DejaVu_Sans',Tahoma,sans-serif] text-[7px] leading-[9px] text-black">
      <div className="relative flex flex-1 flex-col bg-[#ece9d8]">
        <header className="flex h-4 items-center gap-[3px] bg-gradient-to-b from-[#9db4ef] via-[#7b96df] to-[#8fabee] pl-px pr-px">
          <AppLogo className="size-2.5" />
          <h1 className="flex-1 font-['Liberation_Sans',Arial,sans-serif] text-[8px] font-bold text-[#e4ebfc]">Report Designer - [New Layout 7]</h1>
          <WindowButtons faded />
        </header>
        <div className="bg-gradient-to-r from-[#86a9ef] via-[#b0c8f7] to-[#c6d9f9]">
          <div className="flex h-[23px] items-center border-t border-[#6f8fe0] pl-[3px] pr-1.5">
            <AppLogo className="mr-[11px] size-[18px]" />
            <nav className="flex flex-1 gap-[13px]">
              {menus.map((menu) => (
                <button key={menu} type="button">
                  <span className="underline">{menu[0]}</span>
                  {menu.slice(1)}
                </button>
              ))}
            </nav>
            <svg viewBox="0 0 30 8" className="h-2 w-[30px]" fill="none" stroke="#111">
              <path d="M1 6.500h4" strokeWidth="1.500" />
              <path d="M13.500 3V1.500h4v3H16M11.500 3.500h4v3h-4z" />
              <path d="M24 1.500l5 5M29 1.500l-5 5" strokeWidth="1.300" />
            </svg>
          </div>
          <Toolbars />
        </div>
        <div className="flex flex-1 bg-[#ece9d8]">
          <Toolbox />
          <span className="w-0.5 bg-[#c9d8f3]" />
          <Designer />
          <aside className="ml-[3px] flex w-36 shrink-0 flex-col border-2 border-[#b7cdf3]">
            <Explorer />
            <Properties />
          </aside>
        </div>
        <footer className="mt-0.5 flex h-3 items-center border-t border-[#d6d2be] pl-[7px] pr-2">
          <span className="flex-1">Ready</span>
          <span className="border-l border-[#d6d2be] px-1.5">New</span>
          <span className="border-l border-[#d6d2be] px-1.5">Layout: Custom1</span>
          <span className="border-l border-[#d6d2be] px-1.5">Data Source: None</span>
          <span className="border-l border-[#d6d2be] pl-1.5">Open Reports: 1</span>
        </footer>
        <div className="h-0.5 bg-[#2f72e4]" />
        <ReportSetting />
      </div>
    </div>
  );
}
